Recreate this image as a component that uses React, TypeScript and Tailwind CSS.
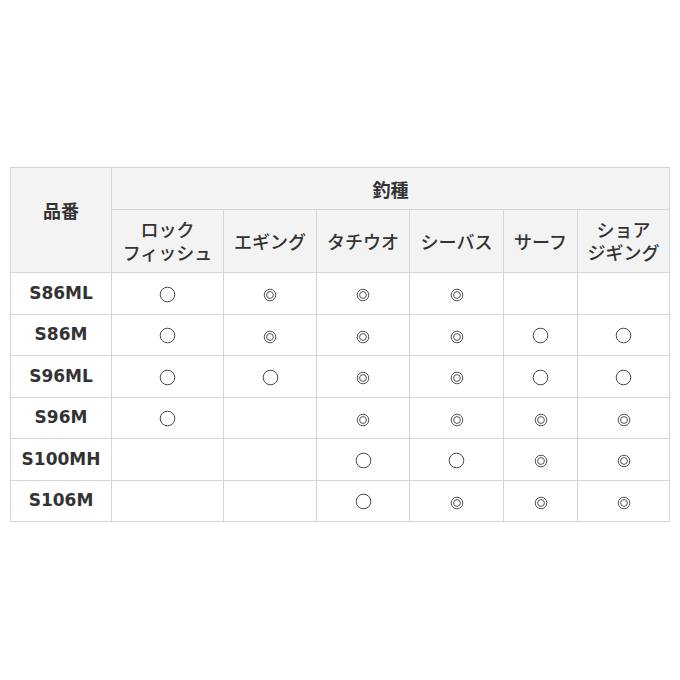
import React from "react";

type Mark = "" | "o" | "d";

const Circle = () => (
  <svg width="17" height="17" viewBox="0 0 17 17" className="inline-block align-middle">
    <circle cx="8.5" cy="8.5" r="7.3" fill="none" stroke="#444" strokeWidth="1" />
  </svg>
);

const Double = () => (
  <svg width="14" height="14" viewBox="0 0 14 14" className="inline-block align-middle">
    <circle cx="7" cy="7" r="5.8" fill="none" stroke="#555" strokeWidth="1" />
    <circle cx="7" cy="7" r="3.4" fill="none" stroke="#555" strokeWidth="1" />
  </svg>
);

const rows: { name: string; marks: Mark[] }[] = [
  { name: "S86ML", marks: ["o", "d", "d", "d", "", ""] },
  { name: "S86M", marks: ["o", "d", "d", "d", "o", "o"] },
  { name: "S96ML", marks: ["o", "o", "d", "d", "o", "o"] },
  { name: "S96M", marks: ["o", "", "d", "d", "d", "d"] },
  { name: "S100MH", marks: ["", "", "o", "o", "d", "d"] },
  { name: "S106M", marks: ["", "", "o", "d", "d", "d"] },
];

const jp = { fontFamily: '"Noto Sans CJK JP", "Noto Sans", sans-serif' };
const latin = { fontFamily: '"DejaVu Sans", Verdana, sans-serif' };

const heads: string[][] = [
  ["ロック", "フィッシュ"],
  ["エギング"],
  ["タチウオ"],
  ["シーバス"],
  ["サーフ"],
  ["ショア", "ジギング"],
];

export default function App() {
  return (
    <div className="w-[680px] h-[680px] bg-white pt-[167px] pl-[10px]">
      <table className="table-fixed border-collapse text-[#333]" style={jp}>
        <colgroup>
          <col className="w-[101px]" />
          <col className="w-[112px]" />
          <col className="w-[93px]" />
          <col className="w-[93px]" />
          <col className="w-[94px]" />
          <col className="w-[74px]" />
          <col className="w-[92px]" />
        </colgroup>
        <thead>
          <tr className="h-[42px]">
            <th
              rowSpan={2}
              className="border border-[#d6d6d6] bg-[#f3f3f3] text-[18px] font-bold align-middle leading-[24px]"
            >
              <span className="relative -top-[10px]">品番</span>
            </th>
            <th
              colSpan={6}
              className="border border-[#d6d6d6] bg-[#f3f3f3] text-[18px] font-bold leading-[24px]"
            >
              釣種
            </th>
          </tr>
          <tr className="h-[63px]">
            {heads.map((lines, i) => (
              <th
                key={i}
                className="border border-[#d6d6d6] bg-[#f3f3f3] text-[18px] font-medium leading-[23px] px-0"
              >
                {lines.length === 2 ? (
                  <>
                    {lines[0]}
                    <br />
                    {lines[1]}
                  </>
                ) : (
                  lines[0]
                )}
              </th>
            ))}
          </tr>
        </thead>
        <tbody>
          {rows.map((r) => (
            <tr key={r.name} className="h-[41.5px]">
              <td
                className="border border-[#d6d6d6] text-center text-[17px] font-bold text-[#333]"
                style={latin}
              >
                {r.name}
              </td>
              {r.marks.map((m, i) => (
                <td key={i} className="border border-[#d6d6d6] text-center align-middle leading-none">
                  {m === "o" ? <Circle /> : m === "d" ? <Double /> : null}
                </td>
              ))}
            </tr>
          ))}
        </tbody>
      </table>
    </div>
  );
}
